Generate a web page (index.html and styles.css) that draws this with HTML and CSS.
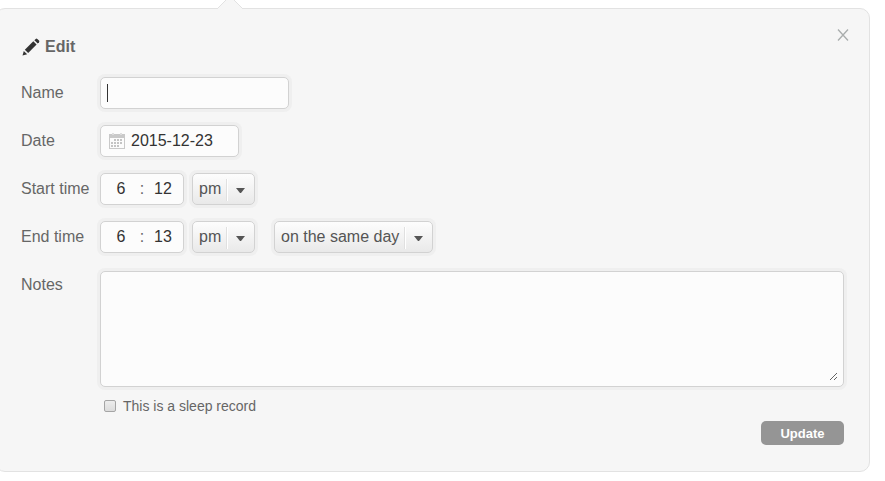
FILE: index.html
```html
<!DOCTYPE html>
<html lang="en">
<head>
    <meta charset="UTF-8">
    <meta name="viewport" content="width=device-width, initial-scale=1.0">
    <title>Edit</title>
    <link rel="stylesheet" href="styles.css">
</head>
<body>
    <form class="panel">
        <svg class="pointer" width="26" height="13" viewBox="0 0 26 13">
            <path d="M0 13 L13 0 L26 13" fill="#f6f6f6" stroke="#e2e2e2"/>
        </svg>
        <button type="button" class="close" aria-label="Close">
            <svg width="12" height="12" viewBox="0 0 12 12">
                <path d="M1 0.5 L11 11.5 M11 0.5 L1 11.5" stroke="#a9adad" stroke-width="1.3"/>
            </svg>
        </button>

        <h2 class="title">
            <svg width="18" height="18" viewBox="0 0 18 18" fill="#333">
                <path d="M0.5 17.5 L1.8 12.9 L5.2 16.2 Z"/>
                <path d="M2.8 11.7 L11.3 3.3 L14.6 6.6 L6.2 15.1 Z"/>
                <path d="M12.4 2.2 L13.7 0.9 Q14.5 0.2 15.3 0.9 L17 2.6 Q17.7 3.4 17 4.2 L15.7 5.5 Z"/>
            </svg>
            Edit
        </h2>

        <div class="row">
            <label class="name" for="name">Name</label>
            <input type="text" id="name" class="box text focused">
        </div>

        <div class="row">
            <label class="name" for="date">Date</label>
            <div class="box date">
                <svg width="16" height="16" viewBox="0 0 16 16" shape-rendering="crispEdges">
                    <path d="M0 1h16v15h-16z M1 5v10h14v-10z" fill="#c9c9c9" fill-rule="evenodd"/>
                    <path d="M3 0h2v2h-2z M11 0h2v2h-2z" fill="#dedede"/>
                    <path d="M5 7h9 M2 10h12 M2 13h9" stroke="#c4c4c4" stroke-width="2" stroke-dasharray="2 1"/>
                </svg>
                <input type="text" id="date" value="2015-12-23">
            </div>
        </div>

        <div class="row">
            <label class="name" for="startHour">Start time</label>
            <div class="box time">
                <input type="text" id="startHour" value="6">
                <span>:</span>
                <input type="text" aria-label="Start minutes" value="12">
            </div>
            <select class="box" aria-label="Start am or pm">
                <option>am</option>
                <option selected>pm</option>
            </select>
        </div>

        <div class="row">
            <label class="name" for="endHour">End time</label>
            <div class="box time">
                <input type="text" id="endHour" value="6">
                <span>:</span>
                <input type="text" aria-label="End minutes" value="13">
            </div>
            <select class="box" aria-label="End am or pm">
                <option>am</option>
                <option selected>pm</option>
            </select>
            <select class="box day" aria-label="End day">
                <option selected>on the same day</option>
                <option>on the next day</option>
            </select>
        </div>

        <div class="row notes">
            <label class="name" for="notes">Notes</label>
            <div class="box area">
                <textarea id="notes"></textarea>
            </div>
        </div>

        <div class="check">
            <input type="checkbox" id="sleep">
            <label for="sleep">This is a sleep record</label>
        </div>

        <div class="actions">
            <button type="submit" class="update">Update</button>
        </div>
    </form>
</body>
</html>
```

FILE: styles.css
```css
*{
    margin: 0;
    padding: 0;
    box-sizing: border-box;
}
body{
    background-color: #fff;
    font-family: "Liberation Sans", Arial, Helvetica, sans-serif;
    font-size: 16px;
    color: #666;
}
input, select, textarea, button{
    font-family: inherit;
    font-size: inherit;
    color: #333;
    border: 0;
    outline: 0;
    background: none;
}
/* the left edge slides under the window border */
.panel{
    position: relative;
    margin: 8px 15px 0 -5px;
    padding: 26px 25px 26px;
    background-color: #f6f6f6;
    border: 1px solid #e2e2e2;
    border-radius: 10px;
}
.pointer{
    position: absolute;
    top: -13px;
    left: 221px;
}
.close{
    position: absolute;
    top: 20px;
    right: 20px;
    width: 12px;
    height: 12px;
    cursor: pointer;
}
.close svg{
    display: block;
}
.title{
    display: flex;
    align-items: center;
    gap: 5px;
    height: 24px;
    margin-bottom: 18px;
    padding-left: 1px;
    font-size: 16px;
}
.row{
    display: flex;
    align-items: flex-start;
    margin-bottom: 16px;
}
.name{
    width: 79px;
    line-height: 32px;
    flex-shrink: 0;
}
.box{
    height: 32px;
    background-color: #fcfcfc;
    border: 1px solid #d2d2d2;
    border-radius: 5px;
    box-shadow: 0 0 0 3px #efefef;
}
.text{
    width: 189px;
    padding: 0 6px;
}
/* text cursor */
.focused{
    caret-color: transparent;
    background-image: linear-gradient(#333, #333);
    background-repeat: no-repeat;
    background-size: 1px 18px;
    background-position: 6px 6px;
}
.date{
    display: flex;
    align-items: center;
    gap: 6px;
    width: 139px;
    padding: 0 8px;
}
.date svg{
    flex-shrink: 0;
}
.date input{
    width: 100%;
}
.time{
    display: flex;
    align-items: center;
    justify-content: space-between;
    width: 84px;
    margin-right: 8px;
    padding: 0 8px;
}
.time input{
    width: 24px;
    text-align: center;
}
select.box{
    appearance: none;
    width: 63px;
    padding: 0 0 2px 6px;
    color: #555;
    cursor: pointer;
    background: 
        url("data:image/svg+xml,%3Csvg xmlns='http://www.w3.org/2000/svg' width='28' height='22'%3E%3Cpath d='M0 0h1v22h-1z' fill='%23e0e0e0'/%3E%3Cpath d='M1 0h1v22h-1z' fill='%23fff'/%3E%3Cpath d='M10 9h9l-4 5h-1z' fill='%23555'/%3E%3C/svg%3E") no-repeat right 0 top 5px,
        linear-gradient(#fdfdfd, #e9e9e9);
}
select.day{
    width: 159px;
    margin-left: 19px;
}
.notes{
    margin-top: 18px;
    margin-bottom: 11px;
}
.notes .name{
    line-height: 28px;
}
.area{
    flex: 1;
    height: auto;
    padding: 5px;
}
textarea{
    display: block;
    width: 100%;
    height: 104px;
    resize: vertical;
}
.check{
    display: flex;
    align-items: center;
    gap: 7px;
    height: 16px;
    margin-left: 83px;
    font-size: 14px;
}
.check input{
    appearance: none;
    width: 12px;
    height: 12px;
    border: 1px solid #a5a5a5;
    border-radius: 2px;
    background-image: linear-gradient(#ededed, #dcdcdc);
}
.check input:checked{
    background: #666;
}
.actions{
    display: flex;
    justify-content: flex-end;
    margin-top: 7px;
}
.update{
    width: 83px;
    height: 24px;
    background-color: #959595;
    border-radius: 5px;
    color: #fff;
    font-size: 13px;
    font-weight: bold;
    cursor: pointer;
}
.update:hover{
    background-color: #7d7d7d;
}
```
